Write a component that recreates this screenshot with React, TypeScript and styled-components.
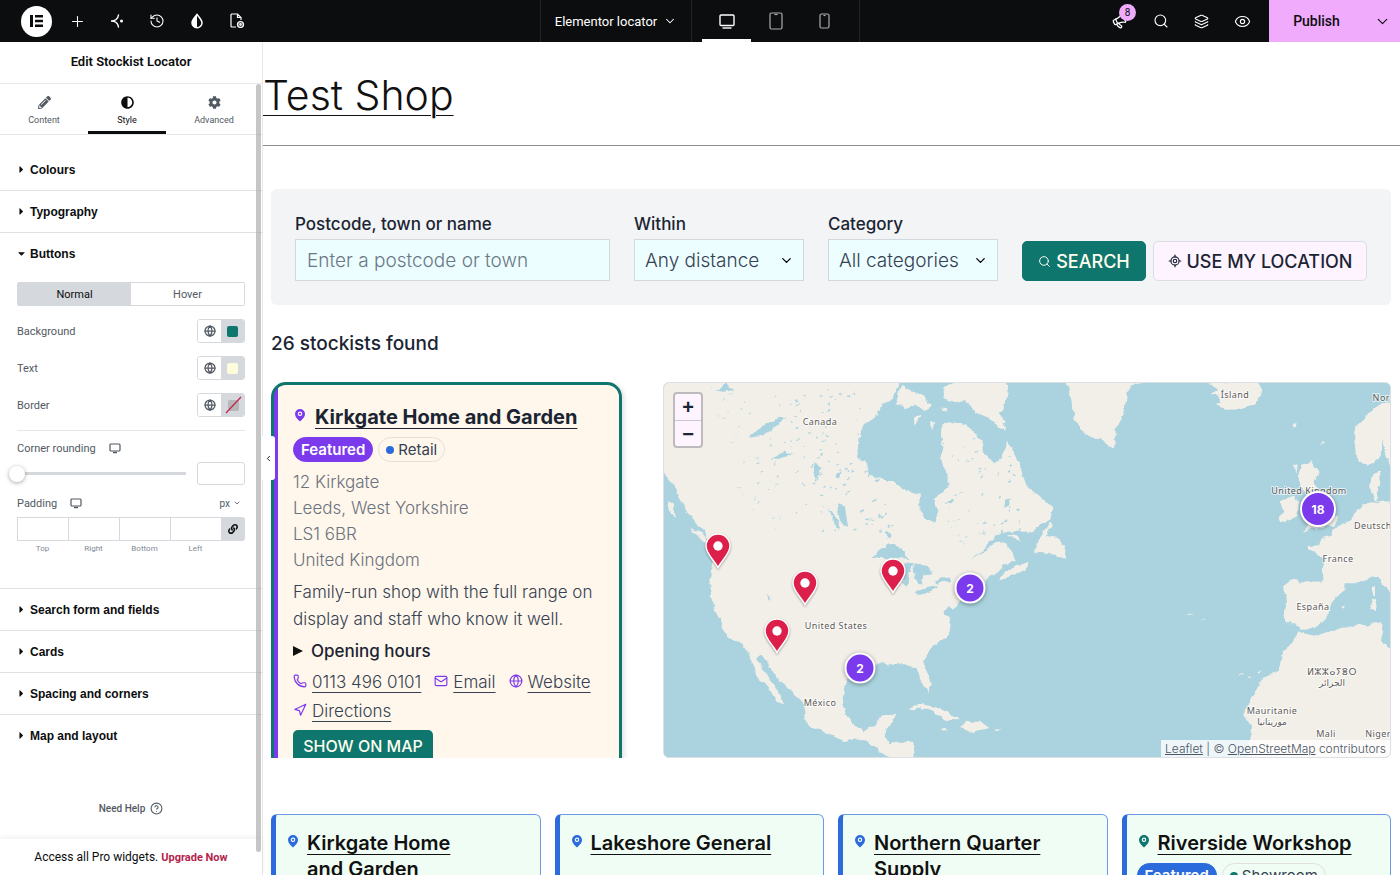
import React from 'react';
import styled, { createGlobalStyle } from 'styled-components';
import {
  ChevronDown, ChevronLeft, CircleHelp, Eye, Globe, History, Layers, LocateFixed,
  Mail, Megaphone, Navigation, Phone, Plus, Search, Smartphone, Tablet,
} from 'lucide-react';
import { FaAdjust, FaCaretDown, FaCaretRight, FaCog, FaLink, FaPencilAlt } from 'react-icons/fa';

const teal = '#0f766e';
const purple = '#7c3aed';
const blue = '#2b6bdc';
const ink = '#1b2433';
const ui = 'Roboto, "Liberation Sans", sans-serif';
const site = 'Inter, "Liberation Sans", sans-serif';

const GlobalStyle = createGlobalStyle`
  *, *::before, *::after { box-sizing: border-box; }
  body { margin: 0; background: #fff; font-family: ${ui}; color: #0c0d0e; }
  button, input, select { font: inherit; color: inherit; margin: 0; }
  button { cursor: pointer; }
  svg { flex: none; display: block; }
`;

const Shell = styled.div`
  display: flex;
  flex-direction: column;
  height: 100vh;
  overflow: hidden;
`;

/* ---------- top bar ---------- */

const TopBar = styled.header`
  display: grid;
  grid-template-columns: 1fr auto 1fr;
  height: 42px;
  flex: none;
  background: #0c0d0e;
  color: #fff;
`;
const BarSide = styled.div<{ $end?: boolean }>`
  display: flex;
  align-items: center;
  justify-content: ${p => (p.$end ? 'flex-end' : 'flex-start')};
  padding-left: ${p => (p.$end ? 0 : 16)}px;
`;
const BarButton = styled.button<{ $wide?: boolean }>`
  position: relative;
  display: flex;
  align-items: center;
  justify-content: center;
  width: ${p => (p.$wide ? 41 : 40)}px;
  height: 42px;
  padding: 0;
  border: 0;
  background: none;
`;
const MenuButton = styled(BarButton)`
  margin-right: 1px;
`;
const LogoDisc = styled.span`
  display: flex;
  align-items: center;
  justify-content: center;
  width: 31px;
  height: 31px;
  border-radius: 50%;
  background: #fff;
`;
const BarCentre = styled.div`
  display: flex;
  border-left: 1px solid #232527;
  border-right: 1px solid #232527;
`;
const DocumentButton = styled.button`
  display: flex;
  align-items: center;
  gap: 6px;
  padding: 0 14px;
  border: 0;
  border-right: 1px solid #232527;
  background: none;
  font-size: 13px;
`;
const Devices = styled.div`
  display: flex;
  padding: 0 10px;
`;
const Device = styled.button<{ $on?: boolean }>`
  display: flex;
  align-items: center;
  justify-content: center;
  width: 49px;
  padding: 3px 0 0;
  border: 0;
  border-bottom: 3px solid ${p => (p.$on ? '#fff' : 'transparent')};
  background: none;
  color: ${p => (p.$on ? '#fff' : '#a9adb1')};
`;
const News = styled(Megaphone)`
  transform: rotate(-25deg);
`;
const Count = styled.span`
  position: absolute;
  top: 4px;
  right: 4px;
  width: 17px;
  height: 17px;
  border-radius: 50%;
  background: #f0abfc;
  color: #0c0d0e;
  font-size: 10px;
  line-height: 17px;
`;
const Publish = styled.div`
  display: flex;
  height: 42px;
  margin-left: 6px;
  background: #f0abfc;
  color: #0c0d0e;
`;
const PublishButton = styled.button<{ $narrow?: boolean }>`
  display: flex;
  align-items: center;
  justify-content: center;
  width: ${p => (p.$narrow ? 36 : 95)}px;
  padding: 0;
  border: 0;
  background: none;
  font-size: 14px;
  font-weight: 500;
`;

/* ---------- side panel ---------- */

const Workspace = styled.div`
  display: flex;
  flex: 1;
  min-height: 0;
`;
const Panel = styled.aside`
  position: relative;
  display: flex;
  flex-direction: column;
  width: 263px;
  flex: none;
  border-right: 1px solid #e6e8ea;
  background: #fff;
`;
const PanelTitle = styled.h1`
  margin: 0;
  height: 42px;
  border-bottom: 1px solid #e6e8ea;
  font-size: 13px;
  font-weight: 600;
  line-height: 40px;
  text-align: center;
`;
const PanelTabs = styled.div`
  display: grid;
  grid-template-columns: 88fr 78fr 96fr;
  height: 51px;
  flex: none;
  border-bottom: 1px solid #e6e8ea;
`;
const PanelTab = styled.button<{ $on?: boolean }>`
  display: flex;
  flex-direction: column;
  align-items: center;
  gap: 4px;
  padding: 12px 0 0;
  border: 0;
  border-bottom: 3px solid ${p => (p.$on ? '#0c0d0e' : 'transparent')};
  background: none;
  color: ${p => (p.$on ? '#0c0d0e' : '#515962')};
  font-size: 9px;
  line-height: 14px;
`;
const PanelBody = styled.div`
  flex: 1;
  min-height: 0;
  overflow: hidden;
  padding-top: 14px;
`;
const Section = styled.section`
  border-bottom: 1px solid #dfe1e3;
  &:last-of-type { border-bottom: 0; }
`;
const SectionToggle = styled.button`
  display: flex;
  align-items: center;
  gap: 3px;
  width: 100%;
  height: 41px;
  padding: 0 16px;
  border: 0;
  background: none;
  font-family: "Liberation Sans", Arial, sans-serif;
  font-size: 12px;
  font-weight: 700;
`;
const SectionBody = styled.div`
  display: flex;
  flex-direction: column;
  padding: 8px 17px 34px;
  color: #515962;
  font-size: 11px;
`;
const StateTabs = styled.div`
  display: grid;
  grid-template-columns: 1fr 1fr;
  height: 24px;
  margin-bottom: 13px;
  border: 1px solid #d5d8dc;
  border-radius: 2px;
`;
const StateTab = styled.button<{ $on?: boolean }>`
  padding: 0;
  border: 0;
  background: ${p => (p.$on ? '#d5d8dc' : '#fff')};
  color: ${p => (p.$on ? '#0c0d0e' : '#515962')};
`;
const ControlRow = styled.div`
  display: flex;
  align-items: center;
  justify-content: space-between;
  height: 24px;
  margin-bottom: 13px;
`;
const ColourPair = styled.span`
  display: flex;
  width: 48px;
  height: 24px;
  border: 1px solid #d5d8dc;
  border-radius: 3px;
  overflow: hidden;
`;
const ColourButton = styled.button<{ $swatch?: boolean }>`
  display: flex;
  flex: 1;
  align-items: center;
  justify-content: center;
  padding: 0;
  border: 0;
  background: ${p => (p.$swatch ? '#d5d8dc' : '#fff')};
  color: #515962;
`;
const Swatch = styled.span<{ $colour: string }>`
  width: 11px;
  height: 11px;
  border-radius: 2px;
  background: ${p => p.$colour};
`;
const Divider = styled.hr`
  width: 100%;
  margin: 0 0 7px;
  border: 0;
  border-top: 1px solid #e6e8ea;
`;
const LabelRow = styled.div`
  display: flex;
  align-items: center;
  height: 20px;
  gap: 13px;
`;
const UnitButton = styled.button`
  display: flex;
  align-items: center;
  gap: 3px;
  margin-left: auto;
  padding: 0 4px 0 0;
  border: 0;
  background: none;
  font-size: 10px;
`;
const SliderRow = styled.div`
  display: flex;
  align-items: center;
  gap: 11px;
  margin: 4px 0 8px;
`;
const Slider = styled.input`
  appearance: none;
  flex: 1;
  min-width: 0;
  height: 16px;
  margin-left: -8px;
  background: linear-gradient(#d5d8dc, #d5d8dc) 8px 50% / 100% 3px no-repeat;
  &::-webkit-slider-thumb {
    appearance: none;
    width: 16px;
    height: 16px;
    border-radius: 50%;
    background: #fff;
    box-shadow: 0 1px 4px rgba(0, 0, 0, 0.35);
  }
`;
const SmallInput = styled.input`
  width: 48px;
  height: 23px;
  border: 1px solid #d5d8dc;
  border-radius: 3px;
  background: #fff;
`;
const Sides = styled.div`
  display: grid;
  grid-template-columns: repeat(4, 51px) 1fr;
  margin-top: 4px;
`;
const Side = styled.label`
  display: flex;
  flex-direction: column;
  align-items: center;
  gap: 3px;
  color: #818a96;
  font-size: 8px;
  line-height: 10px;
`;
const SideInput = styled.input`
  width: 51px;
  height: 24px;
  border: 1px solid #d5d8dc;
  border-right: 0;
  background: #fff;
`;
const LinkSides = styled.button`
  display: flex;
  align-items: center;
  justify-content: center;
  height: 24px;
  padding: 0;
  border: 0;
  border-radius: 0 3px 3px 0;
  background: #d5d8dc;
  color: #0c0d0e;
`;
const HelpLink = styled.a`
  display: flex;
  align-items: center;
  justify-content: center;
  gap: 5px;
  padding-top: 46px;
  color: #515962;
  font-size: 10px;
  font-weight: 500;
  text-decoration: none;
`;
const PanelFoot = styled.footer`
  display: flex;
  align-items: center;
  justify-content: center;
  gap: 3px;
  height: 36px;
  flex: none;
  box-shadow: 0 -2px 5px rgba(0, 0, 0, 0.06);
  font-size: 12px;
`;
const Upgrade = styled.a`
  color: #b51f4c;
  font-size: 11px;
  font-weight: 700;
  text-decoration: none;
`;
const ScrollThumb = styled.span`
  position: absolute;
  top: 42px;
  right: 1px;
  bottom: 23px;
  width: 5px;
  border-radius: 3px;
  background: rgba(160, 160, 160, 0.6);
`;
const Collapse = styled.button`
  position: absolute;
  z-index: 2;
  left: 100%;
  top: 394px;
  display: flex;
  align-items: center;
  justify-content: center;
  width: 13px;
  height: 44px;
  padding: 0;
  border: 0;
  border-radius: 0 3px 3px 0;
  background: #fff;
`;

/* ---------- page canvas ---------- */

const Canvas = styled.main`
  flex: 1;
  min-width: 0;
  overflow: hidden;
  font-family: ${site};
  color: ${ink};
`;
const SiteTitle = styled.h2`
  margin: 0;
  height: 104px;
  border-bottom: 1px solid #8a8f94;
  font-size: 41px;
  font-weight: 300;
  line-height: 106px;
`;
const TitleLink = styled.a`
  color: #111;
  text-decoration-thickness: 1px;
  text-underline-offset: 5px;
`;
const Page = styled.div`
  padding: 43px 9px 0 8px;
`;
const SearchPanel = styled.form`
  display: flex;
  align-items: flex-end;
  gap: 24px;
  padding: 24px;
  border-radius: 6px;
  background: #f3f4f6;
`;
const Field = styled.div<{ $grow?: boolean }>`
  display: flex;
  flex-direction: column;
  gap: 4px;
  min-width: 0;
  flex: ${p => (p.$grow ? '1 1 0' : '0 0 170px')};
`;
const FieldLabel = styled.label`
  font-size: 17px;
  font-weight: 500;
  line-height: 22px;
`;
const TextInput = styled.input`
  width: 100%;
  height: 42px;
  padding: 0 11px;
  border: 1px solid #d1d9de;
  background: #ecfeff;
  font-size: 19px;
  font-weight: 300;
  &::placeholder { color: #6b7885; opacity: 1; }
`;
const SelectBox = styled.span`
  display: grid;
  align-items: center;
  > * { grid-area: 1 / 1; }
  > svg { justify-self: end; margin-right: 10px; pointer-events: none; }
`;
const Select = styled.select`
  appearance: none;
  width: 100%;
  height: 42px;
  padding: 0 10px;
  border: 1px solid #d1d9de;
  border-radius: 0;
  background: #ecfeff;
  color: #364152;
  font-size: 19px;
  font-weight: 300;
`;
const Actions = styled.div`
  display: flex;
  gap: 7px;
`;
const ActionButton = styled.button<{ $primary?: boolean }>`
  display: flex;
  align-items: center;
  justify-content: center;
  gap: 5px;
  width: ${p => (p.$primary ? 124 : 214)}px;
  height: 40px;
  padding: 0;
  border: 1px solid ${p => (p.$primary ? teal : '#dcdce4')};
  border-radius: 5px;
  background: ${p => (p.$primary ? teal : '#fdf4ff')};
  color: ${p => (p.$primary ? '#fffff0' : ink)};
  font-size: 18px;
  font-weight: 500;
  white-space: nowrap;
`;
const Found = styled.p`
  margin: 26px 0;
  font-size: 19px;
  font-weight: 500;
  line-height: 25px;
`;
const Results = styled.div`
  display: grid;
  grid-template-columns: minmax(0, 359fr) minmax(0, 728fr);
  gap: 33px;
  height: 376px;
`;
const List = styled.div`
  overflow: hidden;
  padding-right: 8px;
`;
const StoreCard = styled.article`
  display: flex;
  flex-direction: column;
  align-items: flex-start;
  height: 440px;
  padding: 19px 18px 18px 19px;
  border: 3px solid ${teal};
  border-radius: 15px;
  background: linear-gradient(${purple}, ${purple}) left / 4px 100% no-repeat #fff7eb;
  box-shadow: 2px 1px 5px rgba(0, 0, 0, 0.12);
`;
const StoreHeading = styled.div`
  display: flex;
  gap: 9px;
  color: ${purple};
  > svg { margin: 4px 0 0 1px; }
`;
const StoreName = styled.a<{ $bold?: boolean }>`
  color: ${p => (p.$bold ? ink : '#111')};
  font-size: 20px;
  font-weight: ${p => (p.$bold ? 700 : 600)};
  line-height: 26px;
  text-decoration-thickness: 1px;
  text-underline-offset: 4px;
`;
const Badges = styled.div`
  display: flex;
  gap: 5px;
  margin: 7px 0;
`;
const Badge = styled.span<{ $fill?: string }>`
  display: flex;
  align-items: center;
  gap: 4px;
  height: 25px;
  padding: 0 7px;
  border: 1px solid ${p => p.$fill || '#e3e0dc'};
  border-radius: 13px;
  background: ${p => p.$fill || 'transparent'};
  color: ${p => (p.$fill ? '#fff' : '#364152')};
  font-size: 15px;
  font-weight: ${p => (p.$fill ? 600 : 400)};
`;
const Dot = styled.i<{ $colour: string }>`
  width: 8px;
  height: 8px;
  border-radius: 50%;
  background: ${p => p.$colour};
`;
const Address = styled.address`
  color: #6b7280;
  font-size: 17px;
  font-style: normal;
  font-weight: 300;
  line-height: 26px;
`;
const Blurb = styled.p`
  margin: 6px 0 5px;
  color: #364152;
  font-size: 17px;
  font-weight: 300;
  line-height: 27px;
  white-space: nowrap;
`;
const Hours = styled.details`
  font-size: 17px;
  font-weight: 500;
  line-height: 26px;
  summary { display: flex; align-items: center; gap: 8px; cursor: pointer; }
`;
const Contacts = styled.nav`
  display: flex;
  flex-wrap: wrap;
  column-gap: 13px;
  margin: 4px 0;
`;
const Contact = styled.a`
  display: flex;
  gap: 5px;
  color: #364152;
  font-size: 17px;
  font-weight: 300;
  line-height: 29px;
  text-decoration-thickness: 1px;
  text-underline-offset: 4px;
  > svg { margin-top: 6px; color: ${purple}; }
`;
const ShowButton = styled.button`
  width: 140px;
  height: 32px;
  flex: none;
  padding: 0;
  border: 0;
  border-radius: 5px;
  background: ${teal};
  color: #fffff0;
  font-size: 16px;
  font-weight: 500;
`;
const MapFrame = styled.div`
  position: relative;
  overflow: hidden;
  border: 1px solid #dcdfe3;
  border-radius: 6px;
  background: #aad3df;
`;
const MapArt = styled.svg`
  width: 100%;
  height: 100%;
`;
const Label = styled.text`
  fill: #5e5a58;
  stroke: rgba(255, 255, 255, 0.7);
  stroke-width: 2px;
  paint-order: stroke;
  font-family: "Noto Sans", "DejaVu Sans", sans-serif;
  font-size: 9px;
  letter-spacing: 0.05em;
  text-anchor: middle;
`;
const PinButton = styled.button`
  position: absolute;
  padding: 0;
  border: 0;
  background: none;
  transform: translate(-50%, -100%);
  filter: drop-shadow(0 1px 1px rgba(0, 0, 0, 0.35));
`;
const Cluster = styled.button<{ $size: number }>`
  position: absolute;
  width: ${p => p.$size}px;
  height: ${p => p.$size}px;
  padding: 0;
  border: 2px solid #fff;
  border-radius: 50%;
  background: ${purple};
  box-shadow: 0 1px 4px rgba(0, 0, 0, 0.4);
  color: #fff;
  font-size: 12px;
  font-weight: 700;
  transform: translate(-50%, -50%);
`;
const Zoom = styled.div`
  position: absolute;
  left: 9px;
  top: 9px;
  display: grid;
  width: 30px;
  border: 2px solid #bdbabd;
  border-radius: 4px;
  background: #fdf4ff;
`;
const ZoomButton = styled.button`
  height: 26px;
  padding: 0;
  border: 0;
  background: none;
  font-family: "Liberation Sans", sans-serif;
  font-size: 20px;
  font-weight: 700;
  line-height: 26px;
  & + & { border-top: 1px solid #c9c6cc; line-height: 24px; }
`;
const Credit = styled.div`
  position: absolute;
  right: 0;
  bottom: 0;
  padding: 0 4px;
  background: rgba(255, 255, 255, 0.8);
  color: #4b5563;
  font-size: 12px;
  font-weight: 300;
  line-height: 17px;
  a { color: inherit; text-decoration-thickness: 1px; }
`;
const Tiles = styled.div`
  display: grid;
  grid-template-columns: repeat(4, minmax(0, 1fr));
  gap: 14px;
  margin-top: 56px;
`;
const Tile = styled.article`
  min-height: 160px;
  padding: 15px 34px 15px 10px;
  border: 1px solid #6c9be6;
  border-left: 5px solid ${blue};
  border-radius: 6px;
  background: #f0fdf4;
`;
const TileHeading = styled(StoreHeading)<{ $colour: string }>`
  color: ${p => p.$colour};
  gap: 8px;
`;

/* ---------- drawings ---------- */

const PlacePin = () => (
  <svg width="12" height="14" viewBox="0 0 12 14">
    <path fill="currentColor" d="M6 1a5 5 0 0 1 5 5c0 3-3 5.500-5 7.500C4 11.500 1 9 1 6a5 5 0 0 1 5-5z" />
    <circle cx="6" cy="5.800" r="1.700" fill="none" stroke="#fff" strokeWidth="1.100" />
  </svg>
);

const Screen = ({ size = 12 }: { size?: number }) => (
  <svg width={size} height={size} viewBox="0 0 12 12" fill="none" stroke="currentColor">
    <rect x="1" y="2" width="10" height="7" rx="1" strokeWidth="1.200" />
    <path d="M4 10.500h4" strokeWidth="1.500" />
  </svg>
);

const lakes = Array.from({ length: 200 }, (_, i) => {
  const a = Math.abs(Math.sin(i * 12.9898) * 43758.5453) % 1;
  const b = Math.abs(Math.sin(i * 78.233) * 12543.123) % 1;
  const c = Math.abs(Math.sin(i * 39.425) * 9973.77) % 1;
  const t = i < 135;
  return {
    x: t ? 170 + a * 430 + b * 120 : 870 + a * 240,
    y: t ? 40 + b * 430 : 180 + b * 330,
    rx: 1.5 + c * 4.5,
    ry: 1 + a * 2,
    turn: -50 + c * 40,
  };
});

const americas = 'M20 15V288L48 320 68 362 90 402 122 445 150 470 175 520 170 575 163 630 172 690 190 720 205 760 222 792 258 802 280 835 300 880 304 905 325 920 345 945 365 980 387 988 370 950 345 915 322 880 306 850 322 842 340 865 360 895 380 925 410 950 440 978 452 1008 447 1036 485 1062 532 1080 570 1100 605 1090 642 1100 668 1125 695 1143 725 1150H778V1104L740 1100 705 1106 690 1088 700 1055 725 1016 690 1018 674 1030 664 1056 622 1068 595 1052 575 1022 561 985 568 935 585 905 625 882 660 870 680 866 702 872 740 862 765 877 785 880 795 908 806 938 821 951 827 925 816 888 806 855 818 828 850 802 875 788 888 768 884 735 868 712 882 692 896 702 915 682 950 662 988 640 1000 606 1030 590 1048 570 1082 555 1062 520 1058 500 1020 505 985 530 942 560 980 528 1022 478 1065 470H1130L1168 442 1190 432 1192 400 1155 367 1112 328 1100 292 1082 242 1056 198 1045 242 1018 265 988 238 982 195 952 168 920 145 860 140 858 180 866 218 855 250 876 288 880 328 862 355 835 373 850 408 836 447 818 432 796 406 794 355 760 349 710 320 640 298 632 262 608 246 609 200 625 150 662 125 680 90 712 72 735 15Z';
const baffin = 'M862 40 890 28 905 15H1050L1062 55 1050 88 1038 118 1056 168 1040 160 1000 132 960 108 930 76 900 82 865 70Z M736 32 760 45 805 62 832 92 805 108 780 88 750 102 722 90Z M775 128 798 122 782 148Z M824 142 838 145 832 165Z M855 98 875 98 868 115Z';
const islands = 'M106 458 150 480 168 512 142 498Z M36 375 52 385 64 428 42 408Z M1035 612 1060 582 1092 572 1125 560 1110 588 1072 600 1046 617Z M1060 478 1090 485 1098 498 1078 492Z M762 998 800 988 840 995 880 1015 912 1036 870 1034 840 1010 805 998 775 1004Z M915 1056 935 1040 975 1040 1000 1060 970 1066 955 1075 940 1064Z M854 1064 882 1066 870 1070Z M1020 1062 1040 1064 1022 1069Z';
const lakesBig = 'M648 550 672 525 705 504 738 516 760 552 720 548 692 556 676 545Z M745 565 774 568 762 595 757 635 742 620Z M775 565 822 574 832 598 804 602 800 630 780 612Z M775 656 810 638 843 630 845 640 795 663Z M834 620 882 604 885 618 842 626Z M280 188 318 155 380 125 395 128 355 160 320 183Z M345 258 382 230 418 235 370 252Z M183 45 212 28 235 45 200 52Z M480 258 502 282 488 318 474 290Z M545 382 570 400 580 460 555 440Z M522 398 545 430 560 470 538 445Z M335 655 348 675 340 672Z M692 475 706 472 705 492 694 490Z M1048 375 1070 370 1064 390 1044 398Z M868 385 900 375 888 388Z M540 295 565 292 545 315Z';
const greenland = 'M105 15 122 60 128 110 150 158 180 190 210 188 235 218 252 215 258 160 275 128 292 62 300 35 350 15Z M535 25 572 22 600 15 680 15 695 45 680 85 615 108 575 98 558 88 575 80 560 62 540 58 562 45Z';
const newfoundland = 'M-10 350 38 372 35 384 65 402 62 432 30 450-10 476Z M62 440 68 450 46 482 90 490 98 512 110 522 106 552 78 540 12 532 28 492Z';
const europe = 'M1090 78 1060 85 1020 112 985 145 972 175 978 245 1008 272 1035 260 1055 240 1058 192 1070 245 1090 300Z M1090 378 1040 380 1022 350 1020 305 1050 285 1052 320 1040 350 1046 384 1000 388 968 425 940 448 910 462 908 482 875 490 868 508 830 510 832 524 860 530 878 550 880 620 780 618 762 632 768 680 760 715 768 745 795 745 812 762 860 755 888 728 905 680 945 650 948 625 985 625 1020 610 1040 605 1090 660Z';
const britain = 'M792 265 804 270 795 295Z M815 270 850 255 850 282 868 285 850 320 875 350 900 405 922 425 910 452 850 458 818 475 838 445 830 425 845 400 815 330 805 300Z M750 378 790 362 808 385 800 425 755 442 742 432 760 410Z M788 150 800 145 794 162Z M878 195 884 205 878 215Z';
const africa = 'M805 768 850 785 900 768 935 755 1000 750 1055 742 1062 770 1055 800 1090 825V1160H655L660 1050 642 1015 660 975 700 910 745 885 760 830 790 805Z M1025 640 1038 635 1038 662 1028 655Z M1028 672 1042 670 1038 706 1022 702Z M930 695 945 692 940 702Z M630 895 640 900 632 902Z M655 900 665 905 657 910Z M683 895 695 885 690 902Z M470 718 490 714 478 720Z M515 730 522 734 514 734Z';

const labels: [string, number, number][] = [
  ['Canada', 156, 42], ['United States', 172, 246], ['México', 156, 323], ['Ísland', 571, 15],
  ['Norge', 723, 18], ['United Kingdom', 645, 111], ['Deutschland', 719, 146], ['France', 674, 179],
  ['España', 649, 227], ['ⵍⵣⵣⴰⵢⴻⵔ', 668, 292], ['الجزائر', 668, 303], ['Mauritanie', 608, 331],
  ['موريتانيا', 608, 342], ['Mali', 662, 354], ['Niger', 714, 354],
];

const WorldMap = () => (
  <MapArt viewBox="0 0 726 374" preserveAspectRatio="xMidYMid slice" role="img" aria-label="Map of stockists">
    <defs>
      <filter id="coast" x="0" y="0" width="100%" height="100%">
        <feTurbulence type="fractalNoise" baseFrequency="0.120" numOctaves="3" seed="4" />
        <feDisplacementMap in="SourceGraphic" scale="6" xChannelSelector="R" yChannelSelector="G" />
      </filter>
    </defs>
    <g filter="url(#coast)">
      <rect x="-10" y="-10" width="750" height="400" fill="#aad3df" />
      <g transform="translate(-9 -8) scale(0.33333)" fill="#f2efe9">
        <path d={americas} />
        <path d={baffin} />
        <path d={islands} />
        <g fill="#aad3df">
          <path d={lakesBig} />
          {lakes.map((l, i) => (
            <ellipse key={i} cx={l.x} cy={l.y} rx={l.rx} ry={l.ry} transform={`rotate(${l.turn} ${l.x} ${l.y})`} />
          ))}
        </g>
      </g>
      <g transform="translate(366 -8) scale(0.33333)" fill="#f2efe9">
        <path d={greenland} />
        <path d={newfoundland} />
        <path d={europe} />
        <path d={britain} />
        <path d={africa} />
      </g>
    </g>
    {labels.map(([text, x, y]) => (
      <Label key={text} x={x} y={y}>{text}</Label>
    ))}
  </MapArt>
);

const place = (x: number, y: number) => ({ left: `${(x / 726) * 100}%`, top: `${(y / 374) * 100}%` });
const pins: [string, number, number][] = [
  ['Seattle', 54, 186], ['Denver', 141, 223], ['Chicago', 229, 211], ['Phoenix', 113, 271],
];
const clusters: [number, number, number, number][] = [
  [2, 306, 205, 31], [2, 196, 285, 31], [18, 654, 126, 36],
];

const Closed = ({ children }: { children: React.ReactNode }) => (
  <Section>
    <SectionToggle aria-expanded="false"><FaCaretRight size={11} />{children}</SectionToggle>
  </Section>
);

const Colour = ({ name, children }: { name: string; children: React.ReactNode }) => (
  <ControlRow>
    <span>{name}</span>
    <ColourPair>
      <ColourButton aria-label={`${name} global colour`}><Globe size={12} strokeWidth={2.5} /></ColourButton>
      <ColourButton $swatch aria-label={`${name} colour`}>{children}</ColourButton>
    </ColourPair>
  </ControlRow>
);

const tiles = [
  { name: 'Kirkgate Home and\u00a0Garden', colour: blue },
  { name: 'Lakeshore General', colour: blue },
  { name: 'Northern Quarter Supply', colour: blue },
  { name: 'Riverside Workshop', colour: teal, kind: 'Showroom' },
];

export default function App() {
  return (
    <Shell>
      <GlobalStyle />
      <TopBar>
        <BarSide>
          <MenuButton aria-label="Menu">
            <LogoDisc>
              <svg width="13" height="12" viewBox="0 0 13 12" fill="#0c0d0e">
                <path d="M0 0h3v12H0zM5 0h8v2.500H5zM5 4.750h8v2.500H5zM5 9.500h8V12H5z" />
              </svg>
            </LogoDisc>
          </MenuButton>
          <BarButton aria-label="Add element"><Plus size={17} strokeWidth={1.5} /></BarButton>
          <BarButton aria-label="Structure">
            <svg width="16" height="16" viewBox="0 0 16 16" fill="none" stroke="#fff" strokeWidth="1.400" strokeLinecap="round">
              <path d="M9.500 2C9 5.500 6.500 8 2 8c4.500 0 7 2.500 7.500 6" />
              <circle cx="12.500" cy="8" r="1.500" fill="#fff" stroke="none" />
            </svg>
          </BarButton>
          <BarButton aria-label="History"><History size={16} strokeWidth={1.6} /></BarButton>
          <BarButton aria-label="Site settings">
            <svg width="14" height="16" viewBox="0 0 14 16">
              <path d="M7 1.500C9.500 4.500 12 7 12 9.800a5 5 0 0 1-10 0C2 7 4.500 4.500 7 1.500z" fill="none" stroke="#fff" strokeWidth="1.500" />
              <path d="M7 1.500V15a5 5 0 0 1-5-5.200C2 7 4.500 4.500 7 1.500z" fill="#fff" />
            </svg>
          </BarButton>
          <BarButton aria-label="Page settings">
            <svg width="16" height="16" viewBox="0 0 16 16" fill="none" stroke="#fff" strokeWidth="1.200">
              <path d="M7 14H3a1 1 0 0 1-1-1V2a1 1 0 0 1 1-1h5.500L12 4.500V7M8.500 1v3.500H12" />
              <circle cx="11.500" cy="11.500" r="2.900" strokeWidth="1.400" />
              <circle cx="11.500" cy="11.500" r=".8" />
            </svg>
          </BarButton>
        </BarSide>
        <BarCentre>
          <DocumentButton>Elementor locator <ChevronDown size={14} strokeWidth={1.8} /></DocumentButton>
          <Devices>
            <Device $on aria-label="Desktop">
              <svg width="16" height="15" viewBox="0 0 16 15" fill="none" stroke="currentColor" strokeWidth="1.400">
                <rect x="1" y="1" width="14" height="10.500" rx="1" />
                <path d="M3.500 14h9" />
              </svg>
            </Device>
            <Device aria-label="Tablet">
              <svg width="14" height="18" viewBox="0 0 14 18" fill="none" stroke="currentColor" strokeWidth="1.200">
                <rect x="1" y="1" width="12" height="16" rx="1.500" />
                <path d="M5.500 2.500h3" />
              </svg>
            </Device>
            <Device aria-label="Mobile">
              <svg width="11" height="16" viewBox="0 0 11 16" fill="none" stroke="currentColor" strokeWidth="1.200">
                <rect x="1" y="1" width="9" height="14" rx="1.500" />
                <path d="M4.500 2.500h2" />
              </svg>
            </Device>
          </Devices>
        </BarCentre>
        <BarSide $end>
          <BarButton $wide aria-label="What's new">
            <News size={15} strokeWidth={2} /><Count>8</Count>
          </BarButton>
          <BarButton $wide aria-label="Finder"><Search size={16} strokeWidth={1.7} /></BarButton>
          <BarButton $wide aria-label="Layers"><Layers size={15} strokeWidth={1.8} /></BarButton>
          <BarButton $wide aria-label="Preview"><Eye size={17} strokeWidth={1.6} /></BarButton>
          <Publish>
            <PublishButton>Publish</PublishButton>
            <PublishButton $narrow aria-label="Save options"><ChevronDown size={17} strokeWidth={1.6} /></PublishButton>
          </Publish>
        </BarSide>
      </TopBar>

      <Workspace>
        <Panel>
          <PanelTitle>Edit Stockist Locator</PanelTitle>
          <PanelTabs>
            <PanelTab><FaPencilAlt size={13} />Content</PanelTab>
            <PanelTab $on><FaAdjust size={13} />Style</PanelTab>
            <PanelTab><FaCog size={13} />Advanced</PanelTab>
          </PanelTabs>
          <PanelBody>
            <Closed>Colours</Closed>
            <Closed>Typography</Closed>
            <Section>
              <SectionToggle aria-expanded="true"><FaCaretDown size={11} />Buttons</SectionToggle>
              <SectionBody>
                <StateTabs>
                  <StateTab $on>Normal</StateTab>
                  <StateTab>Hover</StateTab>
                </StateTabs>
                <Colour name="Background"><Swatch $colour={teal} /></Colour>
                <Colour name="Text"><Swatch $colour="#fdfddc" /></Colour>
                <Colour name="Border">
                  <svg width="20" height="20" viewBox="0 0 20 20">
                    <rect x="5" y="5" width="11" height="11" rx="2" fill="#b5b7ba" />
                    <path d="M3 18 18 2" stroke="#c5264f" strokeWidth="1.300" />
                  </svg>
                </Colour>
                <Divider />
                <LabelRow><label htmlFor="rounding">Corner rounding</label><Screen /></LabelRow>
                <SliderRow>
                  <Slider id="rounding" type="range" min="0" max="100" defaultValue="0" />
                  <SmallInput aria-label="Corner rounding value" />
                </SliderRow>
                <LabelRow>
                  <span>Padding</span><Screen />
                  <UnitButton>px <ChevronDown size={8} strokeWidth={2.5} /></UnitButton>
                </LabelRow>
                <Sides>
                  {['Top', 'Right', 'Bottom', 'Left'].map(s => (
                    <Side key={s}><SideInput />{s}</Side>
                  ))}
                  <LinkSides aria-label="Link values"><FaLink size={10} /></LinkSides>
                </Sides>
              </SectionBody>
            </Section>
            <Closed>Search form and fields</Closed>
            <Closed>Cards</Closed>
            <Closed>Spacing and corners</Closed>
            <Closed>Map and layout</Closed>
            <HelpLink href="#help">Need Help <CircleHelp size={13} /></HelpLink>
          </PanelBody>
          <PanelFoot>
            Access all Pro widgets. <Upgrade href="#upgrade">Upgrade Now</Upgrade>
          </PanelFoot>
          <ScrollThumb />
          <Collapse aria-label="Hide panel"><ChevronLeft size={9} strokeWidth={2.4} /></Collapse>
        </Panel>

        <Canvas>
          <SiteTitle><TitleLink href="#home">Test Shop</TitleLink></SiteTitle>
          <Page>
            <SearchPanel onSubmit={e => e.preventDefault()}>
              <Field $grow>
                <FieldLabel htmlFor="place">Postcode, town or name</FieldLabel>
                <TextInput id="place" placeholder="Enter a postcode or town" />
              </Field>
              <Field>
                <FieldLabel htmlFor="within">Within</FieldLabel>
                <SelectBox>
                  <Select id="within"><option>Any distance</option></Select>
                  <ChevronDown size={15} color="#000" />
                </SelectBox>
              </Field>
              <Field>
                <FieldLabel htmlFor="category">Category</FieldLabel>
                <SelectBox>
                  <Select id="category"><option>All categories</option></Select>
                  <ChevronDown size={15} color="#000" />
                </SelectBox>
              </Field>
              <Actions>
                <ActionButton $primary><Search size={13} strokeWidth={1.8} />SEARCH</ActionButton>
                <ActionButton type="button"><LocateFixed size={14} strokeWidth={2} />USE MY LOCATION</ActionButton>
              </Actions>
            </SearchPanel>
            <Found>26 stockists found</Found>
            <Results>
              <List>
                <StoreCard>
                  <StoreHeading><PlacePin /><StoreName $bold href="#kirkgate">Kirkgate Home and Garden</StoreName></StoreHeading>
                  <Badges>
                    <Badge $fill={purple}>Featured</Badge>
                    <Badge><Dot $colour={blue} />Retail</Badge>
                  </Badges>
                  <Address>12 Kirkgate<br />Leeds, West Yorkshire<br />LS1 6BR<br />United Kingdom</Address>
                  <Blurb>Family-run shop with the full range on<br />display and staff who know it well.</Blurb>
                  <Hours>
                    <summary>
                      <svg width="10" height="12" viewBox="0 0 10 12"><path d="M0 1v10l10-5z" fill="#111" /></svg>
                      Opening hours
                    </summary>
                  </Hours>
                  <Contacts>
                    <Contact href="#phone"><Phone size={14} />0113 496 0101</Contact>
                    <Contact href="#email"><Mail size={14} />Email</Contact>
                    <Contact href="#website"><Globe size={14} />Website</Contact>
                    <Contact href="#directions"><Navigation size={14} />Directions</Contact>
                  </Contacts>
                  <ShowButton>SHOW ON MAP</ShowButton>
                </StoreCard>
              </List>
              <MapFrame>
                <WorldMap />
                {pins.map(([name, x, y]) => (
                  <PinButton key={name} aria-label={name} style={place(x, y)}>
                    <svg width="26" height="36" viewBox="0 0 26 36">
                      <path d="M13 1a12 12 0 0 1 12 12c0 7.500-7 13-12 21.500C8 26 1 20.500 1 13A12 12 0 0 1 13 1z" fill="#dc1f4b" stroke="#fff" strokeWidth="1.500" />
                      <circle cx="13" cy="13" r="4.700" fill="#fff" />
                    </svg>
                  </PinButton>
                ))}
                {clusters.map(([n, x, y, size]) => (
                  <Cluster key={x} $size={size} style={place(x, y)}>{n}</Cluster>
                ))}
                <Zoom>
                  <ZoomButton aria-label="Zoom in">+</ZoomButton>
                  <ZoomButton aria-label="Zoom out">−</ZoomButton>
                </Zoom>
                <Credit>
                  <a href="#leaflet">Leaflet</a> | © <a href="#osm">OpenStreetMap</a> contributors
                </Credit>
              </MapFrame>
            </Results>
            <Tiles>
              {tiles.map(t => (
                <Tile key={t.name}>
                  <TileHeading $colour={t.colour}><PlacePin /><StoreName href="#store">{t.name}</StoreName></TileHeading>
                  {t.kind && (
                    <Badges>
                      <Badge $fill={blue}>Featured</Badge>
                      <Badge><Dot $colour={teal} />{t.kind}</Badge>
                    </Badges>
                  )}
                </Tile>
              ))}
            </Tiles>
          </Page>
        </Canvas>
      </Workspace>
    </Shell>
  );
}
